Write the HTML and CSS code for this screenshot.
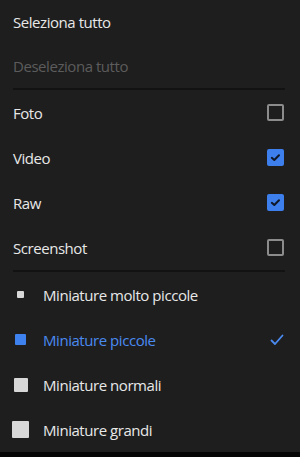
FILE: index.html
```html
<!DOCTYPE html>
<html lang="it">
<head>
  <meta charset="UTF-8" />
  <meta name="viewport" content="width=device-width, initial-scale=1" />
  <title>Menu selezione</title>
  <link rel="stylesheet" href="styles.css">
</head>
<body>

  <div class="menu">
    <!-- Selection actions -->
    <div class="group group-top">
      <div class="row">Seleziona tutto</div>
      <div class="row row-disabled">Deseleziona tutto</div>
    </div>

    <!-- Filters -->
    <div class="group">
      <div class="row">
        <span>Foto</span>
        <span class="checkbox"></span>
      </div>
      <div class="row">
        <span>Video</span>
        <span class="checkbox checked">
          <svg viewBox="0 0 17 17" width="17" height="17"><path d="M4.8 8.8 L7.3 11 L12 6.2" fill="none" stroke="#101828" stroke-width="2" stroke-linecap="round" stroke-linejoin="round"/></svg>
        </span>
      </div>
      <div class="row">
        <span>Raw</span>
        <span class="checkbox checked">
          <svg viewBox="0 0 17 17" width="17" height="17"><path d="M4.8 8.8 L7.3 11 L12 6.2" fill="none" stroke="#101828" stroke-width="2" stroke-linecap="round" stroke-linejoin="round"/></svg>
        </span>
      </div>
      <div class="row">
        <span>Screenshot</span>
        <span class="checkbox"></span>
      </div>
    </div>

    <!-- Thumbnail sizes -->
    <div class="group">
      <div class="row size-row">
        <span class="size-icon"><span class="thumb thumb-xs"></span></span>
        <span class="size-label">Miniature molto piccole</span>
      </div>
      <div class="row size-row active">
        <span class="size-icon"><span class="thumb thumb-sm"></span></span>
        <span class="size-label">Miniature piccole</span>
        <svg class="tick" viewBox="0 0 14 12" width="14" height="12"><path d="M1.5 6.5 L5 10 L12.5 1.5" fill="none" stroke="#4a8af0" stroke-width="1.8" stroke-linecap="round" stroke-linejoin="round"/></svg>
      </div>
      <div class="row size-row">
        <span class="size-icon"><span class="thumb thumb-md"></span></span>
        <span class="size-label">Miniature normali</span>
      </div>
      <div class="row size-row">
        <span class="size-icon"><span class="thumb thumb-lg"></span></span>
        <span class="size-label">Miniature grandi</span>
      </div>
    </div>
  </div>

  <div class="bottom-edge"></div>

</body>
</html>
```

FILE: styles.css
```css
body {
  margin: 0;
  background: #1e1e1e;
  color: #e8e8e8;
  font-family: 'Open Sans', 'Noto Sans', sans-serif;
  font-size: 15px;
  height: 457px;
  display: flex;
  flex-direction: column;
  overflow: hidden;
}

.menu {
  flex: 1;
  padding-top: 1px;
}

.group {
  border-top: 2px solid #121212;
  margin: 0 15px 0 13px;
}

.group-top {
  border-top: none;
}

.group-top .row:first-child {
  height: 42px;
}

.row {
  height: 45px;
  display: flex;
  align-items: center;
  justify-content: space-between;
  letter-spacing: -0.45px;
}

.row-disabled {
  color: #5c5c5c;
}

/* Checkboxes on the right */
.checkbox {
  width: 13px;
  height: 13px;
  border: 2px solid #8c8c8c;
  border-radius: 2px;
  margin-right: 1px;
  display: flex;
}

.checkbox.checked {
  border: none;
  width: 17px;
  height: 17px;
  background: #3d7fec;
}

/* Thumbnail size rows */
.size-row {
  justify-content: flex-start;
}

.size-icon {
  width: 15px;
  flex-shrink: 0;
  display: flex;
  justify-content: center;
  margin-right: 15px;
}

.size-label {
  flex: 1;
}

.thumb {
  display: block;
  flex-shrink: 0;
  background: #d8d8d8;
  border-radius: 1px;
}

.thumb-xs { width: 7px; height: 7px; }
.thumb-sm { width: 11px; height: 11px; background: #3d82ee; }
.thumb-md { width: 14px; height: 14px; }
.thumb-lg { width: 17px; height: 17px; }

.active {
  color: #4a8af0;
}

.tick {
  margin-right: 1px;
}

.bottom-edge {
  height: 5px;
  background: #050505;
}
```
